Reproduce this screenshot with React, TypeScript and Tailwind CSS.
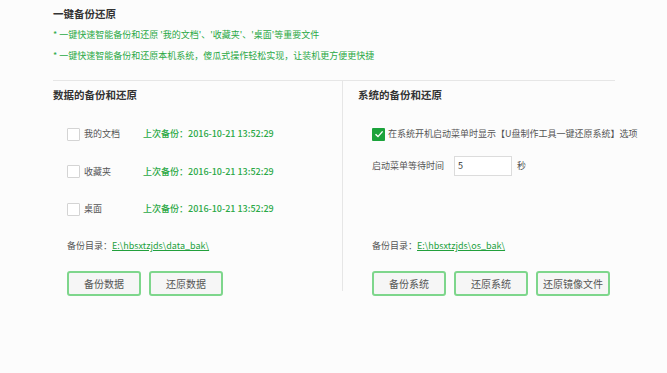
import React from 'react';

const font = { fontFamily: '"Microsoft YaHei", "Noto Sans CJK SC", "Noto Sans", sans-serif' };

const items = ['我的文档', '收藏夹', '桌面'];

function Box({ checked }: { checked?: boolean }) {
  if (checked) {
    return (
      <span className="flex h-[13px] w-[13px] shrink-0 items-center justify-center rounded-[1px] bg-[#1ba33b]">
        <svg width="10" height="10" viewBox="0 0 10 10" fill="none">
          <path d="M1.5 5.2 L4 7.6 L8.6 2.4" stroke="#fff" strokeWidth="1.4" />
        </svg>
      </span>
    );
  }
  return <span className="h-[13px] w-[13px] shrink-0 rounded-[1px] border border-[#d4d4d4] bg-white" />;
}

function Btn({ label }: { label: string }) {
  return (
    <button className="h-[25px] w-[74px] shrink-0 rounded-[3px] border-2 border-[#7ed68c] bg-[#f6f6f6] text-[10px] leading-none text-[#555]">
      {label}
    </button>
  );
}

export default function App() {
  return (
    <div className="min-h-[373px] w-[667px] bg-[#fcfcfc]" style={font}>
      <div className="ml-[53px] w-[562px] pt-[7px]">
        {/* Header */}
        <h1 className="text-[10.5px] font-bold leading-[14px] text-[#333]">一键备份还原</h1>
        <p className="mt-[7px] text-[9px] leading-[14px] text-[#2aa845]">
          * 一键快速智能备份和还原 '我的文档'、'收藏夹'、'桌面'等重要文件
        </p>
        <p className="mt-[7px] text-[9px] leading-[14px] text-[#2aa845]">
          * 一键快速智能备份和还原本机系统，傻瓜式操作轻松实现，让装机更方便更快捷
        </p>

        <div className="mt-[17px] flex border-t border-[#e6e6e6]">
          {/* Left */}
          <div className="w-[289px] shrink-0 pt-[7px]">
            <h2 className="text-[10.5px] font-bold leading-[14px] text-[#333]">数据的备份和还原</h2>
            <div className="ml-[14px] mt-[25px] flex flex-col gap-[23.5px]">
              {items.map((name) => (
                <div key={name} className="flex h-[14px] items-center">
                  <Box />
                  <span className="ml-[4px] w-[59px] text-[9px] leading-[14px] text-[#555]">{name}</span>
                  <span className="text-[9px] font-medium leading-[14px] text-[#2aa845]">
                    上次备份：2016-10-21 13:52:29
                  </span>
                </div>
              ))}
            </div>
            <p className="ml-[14px] mt-[23px] text-[9px] leading-[14px] text-[#555]">
              备份目录：
              <span className="text-[#22a03c] underline">E:\hbsxtzjds\data_bak\</span>
            </p>
            <div className="ml-[14px] mt-[18px] flex gap-[8px]">
              <Btn label="备份数据" />
              <Btn label="还原数据" />
            </div>
          </div>

          {/* Right */}
          <div className="h-[210px] w-[273px] shrink-0 border-l border-[#e6e6e6] pl-[15px] pt-[7px]">
            <h2 className="text-[10.5px] font-bold leading-[14px] text-[#333]">系统的备份和还原</h2>
            <div className="ml-[14px] mt-[25px] flex h-[14px] items-center whitespace-nowrap">
              <Box checked />
              <span className="ml-[3px] text-[9px] leading-[14px] text-[#555]">
                在系统开机启动菜单时显示【U盘制作工具一键还原系统】选项
              </span>
            </div>
            <div className="ml-[14px] mt-[15px] flex items-center">
              <span className="w-[82px] text-[9px] leading-[14px] text-[#555]">启动菜单等待时间</span>
              <div className="flex h-[20px] w-[58px] items-center border border-[#dcdcdc] bg-white pl-[3px] text-[9px] text-[#333]">
                5
              </div>
              <span className="ml-[5px] text-[9px] text-[#555]">秒</span>
            </div>
            <p className="ml-[14px] mt-[63px] text-[9px] leading-[14px] text-[#555]">
              备份目录：
              <span className="text-[#22a03c] underline">E:\hbsxtzjds\os_bak\</span>
            </p>
            <div className="ml-[14px] mt-[18px] flex gap-[8px]">
              <Btn label="备份系统" />
              <Btn label="还原系统" />
              <Btn label="还原镜像文件" />
            </div>
          </div>
        </div>
      </div>
    </div>
  );
}
